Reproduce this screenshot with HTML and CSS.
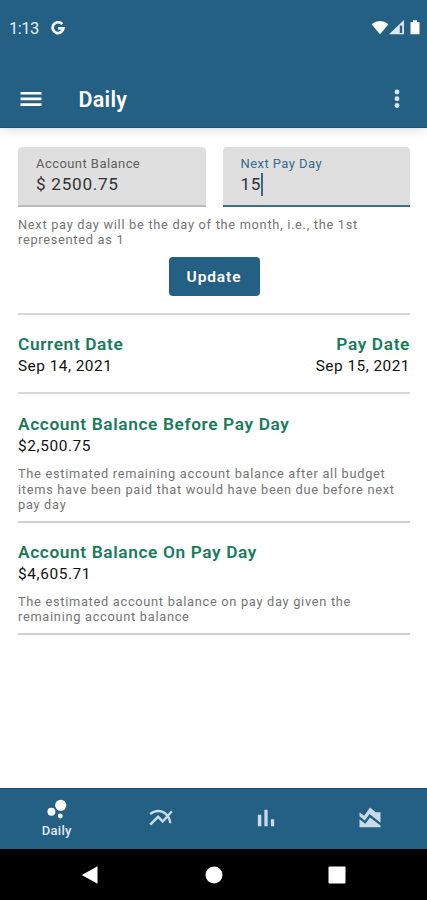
FILE: index.html
```html
<!DOCTYPE html>
<html lang="en">
<head>
<meta charset="utf-8">
<title>Daily</title>
<link rel="stylesheet" href="styles.css">
</head>
<body>
<header class="top">
  <div class="status">
    <span class="clock">1:13</span>
    <svg class="google" viewBox="0 0 14 14"><path d="M11.2 3.2A5.4 5.4 0 1 0 12.4 7.3H7.2" fill="none" stroke="#fff" stroke-width="2.7"/></svg>
    <svg class="signals" viewBox="0 0 50 16"><path d="M.5 4.2Q9 -2.4 17.5 4.2L9 14.3z"/><path d="M18 14.3L33 0v14.3z" opacity=".85"/><path d="M28.8 5.5h2.4v7.5h-2.4z" fill="#236084"/><path d="M39.5 2H42V.3h4V2h2.5v12.3h-9z"/></svg>
  </div>
  <div class="appbar">
    <svg class="icon" viewBox="0 0 24 24"><path d="M3 18h18v-2.3H3v2.3zm0-4.9h18v-2.3H3v2.3zm0-7.2v2.3h18V5.9H3z"/></svg>
    <h1 class="title">Daily</h1>
    <svg class="icon more" viewBox="0 0 24 24"><circle cx="12" cy="6" r="2.1"/><circle cx="12" cy="11.8" r="2.1"/><circle cx="12" cy="17.6" r="2.1"/></svg>
  </div>
</header>
<main class="content">
  <div class="fields">
    <div class="field"><div class="label">Account Balance</div><div class="value">$ 2500.75</div></div>
    <div class="field active"><div class="label">Next Pay Day</div><div class="value">15<span class="caret"></span></div></div>
  </div>
  <p class="note helper">Next pay day will be the day of the month, i.e., the 1st<br>represented as 1</p>
  <button class="update">Update</button>
  <section class="dates">
    <div><h2 class="heading">Current Date</h2><div class="result date">Sep 14, 2021</div></div>
    <div class="right"><h2 class="heading">Pay Date</h2><div class="result date">Sep 15, 2021</div></div>
  </section>
  <section class="summary">
    <h2 class="heading">Account Balance Before Pay Day</h2>
    <div class="result">$2,500.75</div>
    <p class="note">The estimated remaining account balance after all budget<br>items have been paid that would have been due before next<br>pay day</p>
  </section>
  <section class="summary">
    <h2 class="heading">Account Balance On Pay Day</h2>
    <div class="result">$4,605.71</div>
    <p class="note">The estimated account balance on pay day given the<br>remaining account balance</p>
  </section>
</main>
<nav class="tabs">
  <div class="tab selected"><svg class="icon" viewBox="0 0 24 24"><circle cx="7.2" cy="14.4" r="3.4"/><circle cx="14.8" cy="18" r="2.1"/><circle cx="15.2" cy="8.8" r="4.8"/></svg><span class="tab-label">Daily</span></div>
  <div class="tab"><svg class="icon" viewBox="0 0 24 24"><path d="M22 6.92l-1.41-1.41-2.85 3.21C15.68 6.4 12.83 5 9.61 5 6.72 5 4.07 6.16 2 8l1.42 1.42C5.12 7.93 7.27 7 9.61 7c2.74 0 5.09 1.26 6.77 3.24l-2.88 3.24-4-4L2 16.99l1.5 1.5 6-6.01 4 4 4.05-4.55c.75 1.35 1.25 2.9 1.44 4.55H21c-.22-2.3-.95-4.39-2.04-6.14L22 6.92z"/></svg></div>
  <div class="tab"><svg class="icon" viewBox="0 0 24 24"><path d="M5 9.2h3V19H5zM10.6 5h2.8v14h-2.8zm5.6 8H19v6h-2.8z"/></svg></div>
  <div class="tab"><svg class="icon" viewBox="0 0 24 24"><path d="M3 13v7h18v-1.5l-9-7L8 17l-5-4zm0-6l4 3 5-7 5 4h4v8.97l-9.4-7.31-3.98 5.48L3 10.44V7z"/></svg></div>
</nav>
<footer class="system">
  <svg viewBox="0 0 20 20"><path d="M1.8 10L17.5 1.2v17.6z"/></svg>
  <svg viewBox="0 0 20 20"><circle cx="10" cy="10" r="8.5"/></svg>
  <svg viewBox="0 0 20 20"><rect x="1.5" y="1.5" width="17" height="17" rx="1"/></svg>
</footer>
</body>
</html>
```
FILE: styles.css
```css
* { box-sizing: border-box; }
body {
  margin: 0;
  height: 900px;
  display: flex;
  flex-direction: column;
  overflow: hidden;
  background: #fff;
  font-family: Roboto, sans-serif;
  color: #111;
}
h1, h2, p { margin: 0; }
svg { display: block; fill: #fff; flex: none; }
.icon { width: 28px; height: 28px; }
.top {
  height: 128px;
  background: #236084;
  border-bottom: 1px solid #144f74;
  box-shadow: 0 1px 10px rgba(0, 0, 0, .16);
  color: #fff;
}
.status {
  height: 56px;
  padding: 0 6px 0 9px;
  display: flex;
  align-items: center;
}
.clock { width: 42px; font-size: 16.5px; letter-spacing: -.5px; color: #e4eef5; }
.google { width: 14px; height: 14px; }
.signals { width: 50px; height: 16px; margin-left: auto; }
.appbar {
  height: 71px;
  padding: 14px 16px 0 17px;
  display: flex;
  align-items: center;
}
.appbar .title { margin: 2px 0 0 33.5px; font-size: 21.5px; font-weight: 600; line-height: 28px; letter-spacing: .25px; }
.more { margin-left: auto; fill: #d9e6ee; }
.content { flex: 1; padding: 19px 17px 0 18px; }
.fields { display: grid; grid-template-columns: 1fr 1fr; gap: 17px; }
.field {
  height: 60px;
  padding: 8px 18px 0;
  border-radius: 4px 4px 0 0;
  border-bottom: 2px solid #bcbcbc;
  background: #dfdfdf;
}
.field.active { border-color: #3d7090; }
.label { font-size: 13px; line-height: 17px; letter-spacing: .44px; color: #606060; }
.active .label { color: #386b8c; }
.value {
  display: flex;
  align-items: center;
  height: 24px;
  font-size: 17.2px;
  letter-spacing: .7px;
  color: #333;
}
.caret { width: 2px; height: 23px; background: #38698a; }
.note { font-size: 12.8px; line-height: 15.3px; letter-spacing: .71px; color: #747474; white-space: nowrap; }
.helper { margin-top: 10px; }
.update {
  display: block;
  width: 91px;
  height: 39px;
  margin: 9.4px auto 0;
  padding: 2px 0 0;
  border: 0;
  border-radius: 4px;
  background: #236084;
  color: #fff;
  font: 600 15.5px Roboto, sans-serif;
  letter-spacing: .9px;
}
.dates {
  display: flex;
  justify-content: space-between;
  height: 81px;
  margin-top: 17px;
  padding-top: 18px;
  border-top: 2px solid #d8d8d8;
  border-bottom: 2px solid #d8d8d8;
}
.right { text-align: right; }
.heading { font-size: 17.3px; line-height: 22px; font-weight: 600; letter-spacing: .62px; color: #187b5c; }
.result { font-size: 15.4px; line-height: 22px; letter-spacing: .6px; }
.date { letter-spacing: .48px; }
.summary { padding: 19.5px 0 8.6px; border-bottom: 2px solid #d0d0d0; }
.summary + .summary { padding-top: 18.5px; }
.summary .note { margin-top: 8.8px; }
.tabs {
  height: 61px;
  padding: 0 4.5px;
  display: grid;
  grid-template-columns: repeat(4, 1fr);
  background: #236084;
  border-top: 1px solid #144f74;
}
.tab { display: flex; flex-direction: column; align-items: center; padding-top: 15px; }
.tab .icon { fill: #c9dbe7; }
.tab.selected { padding-top: 6px; }
.tab.selected .icon { fill: #fff; }
.tab-label { font-size: 13px; line-height: 15px; font-weight: 500; letter-spacing: .3px; color: #e0ebf2; }
.system {
  height: 51px;
  padding: 0 80px;
  display: flex;
  align-items: center;
  justify-content: space-between;
  background: #000;
}
.system svg { width: 20px; height: 20px; }
```
